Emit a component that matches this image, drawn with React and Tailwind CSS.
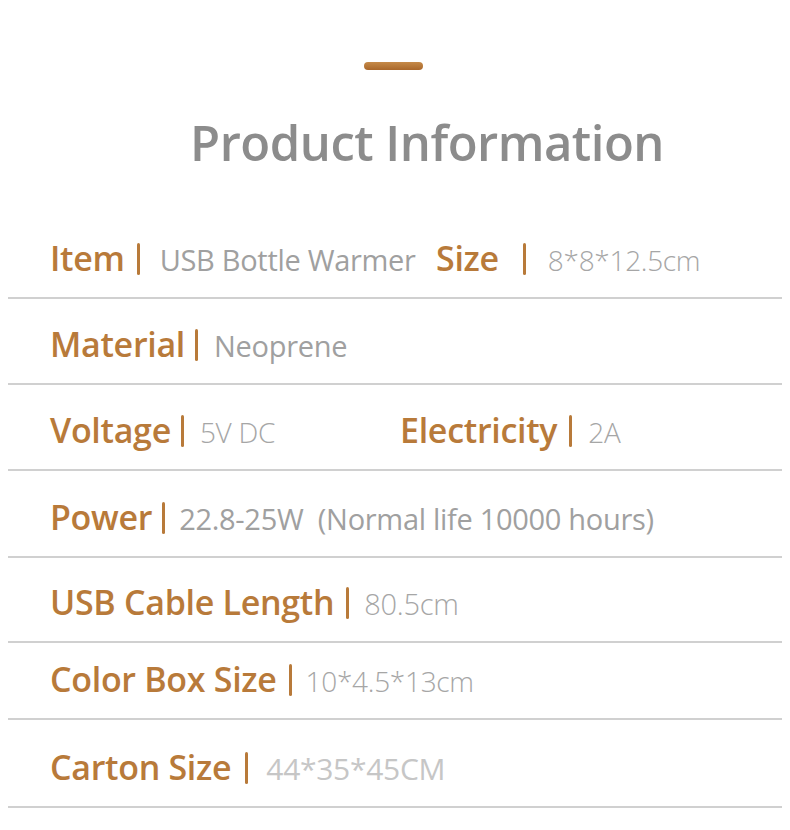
import React from 'react';

const font = { fontFamily: '"Open Sans", "Noto Sans", sans-serif' };

function Field({ label, value, gap = 'ml-[12px]', valueClass = 'text-[#a0a0a0] font-medium text-[29px]', barGap = 'ml-[14px]' }) {
  return (
    <div className="flex items-baseline">
      <span className="text-[34px] font-semibold text-[#b87a3a] tracking-[-0.3px]">{label}</span>
      <span className={`${barGap} inline-block w-[3px] h-[32px] rounded-full bg-[#b87a3a] translate-y-[4px]`} />
      <span className={`${gap} ${valueClass} whitespace-pre tracking-[-0.3px]`}>{value}</span>
    </div>
  );
}

function Row({ h, children }) {
  return (
    <div className={`${h} mx-2 border-b-2 border-[#d0d0d0] flex items-end pb-[22px] pl-[42px] leading-none`}>
      {children}
    </div>
  );
}

const light = 'text-[#a6a6a6] font-light text-[28px]';

export default function App() {
  return (
    <div className="w-[790px] h-[830px] bg-white overflow-hidden" style={font}>
      {/* Heading */}
      <div className="flex flex-col items-center pt-[62px]">
        <div className="w-[59px] h-[8px] rounded-full bg-gradient-to-b from-[#c58a48] to-[#a9672a] ml-[-4px]" />
        <h1 className="mt-[48px] text-[49px] leading-none text-[#8c8c8c] font-semibold tracking-[-0.5px] ml-[64px]">
          Product Information
        </h1>
      </div>

      <div className="mt-[46px]">
        <Row h="h-[86px]">
          <div className="w-[386px]">
            <Field label="Item" value="USB Bottle Warmer" barGap="ml-[12px]" gap="ml-[20px]" />
          </div>
          <Field label="Size" value="8*8*12.5cm" barGap="ml-[24px]" gap="ml-[22px]" valueClass={light} />
        </Row>
        <Row h="h-[86px]">
          <Field label="Material" value="Neoprene" barGap="ml-[10px]" gap="ml-[16px]" />
        </Row>
        <Row h="h-[86px]">
          <div className="w-[350px]">
            <Field label="Voltage" value="5V DC" barGap="ml-[10px]" gap="ml-[16px]" valueClass={light} />
          </div>
          <Field label="Electricity" value="2A" barGap="ml-[12px]" gap="ml-[16px]" valueClass={light} />
        </Row>
        <Row h="h-[87px]">
          <Field label="Power" value="22.8-25W  (Normal life 10000 hours)" barGap="ml-[10px]" gap="ml-[14px]" />
        </Row>
        <Row h="h-[85px]">
          <Field label="USB Cable Length" value="80.5cm" barGap="ml-[12px]" gap="ml-[15px]" valueClass="text-[#a6a6a6] font-light text-[29px]" />
        </Row>
        <Row h="h-[77px]">
          <Field label="Color Box Size" value="10*4.5*13cm" barGap="ml-[12px]" gap="ml-[14px]" valueClass={light} />
        </Row>
        <Row h="h-[88px]">
          <Field label="Carton Size" value="44*35*45CM" barGap="ml-[14px]" gap="ml-[18px]" valueClass="text-[#c6c6c6] font-normal text-[30px]" />
        </Row>
      </div>
    </div>
  );
}
